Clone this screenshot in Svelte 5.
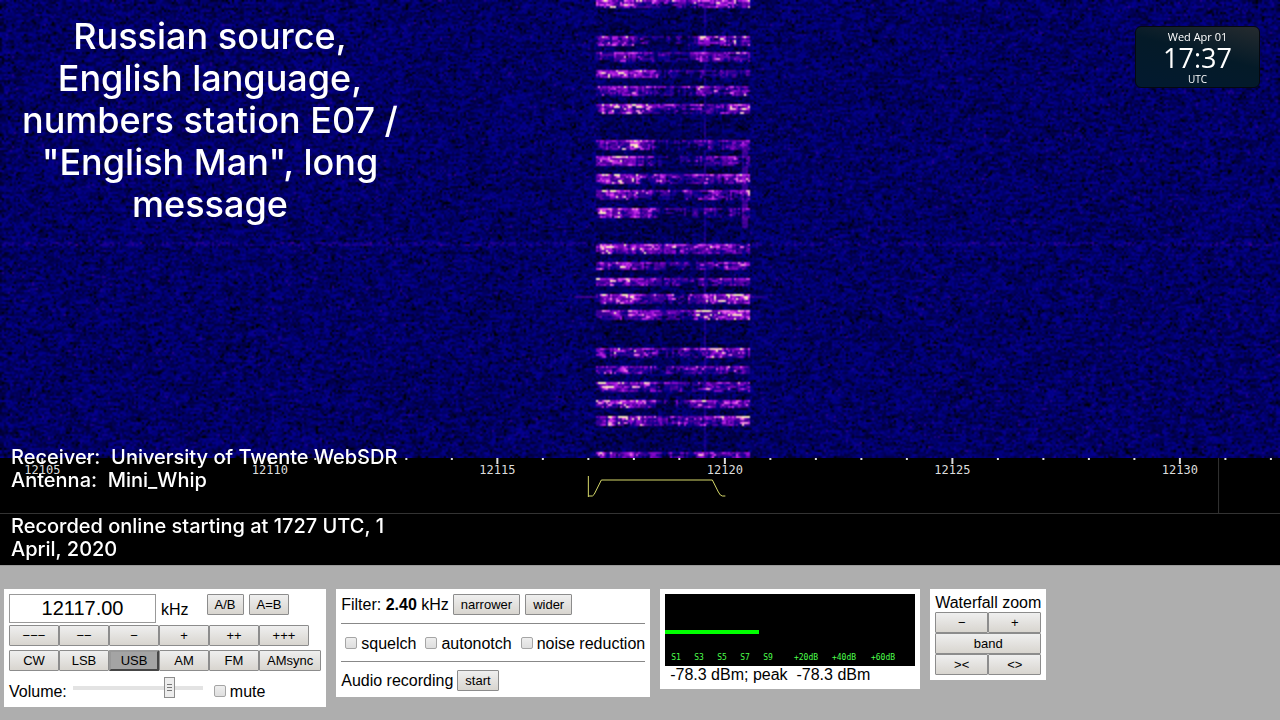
<script lang="ts">
  import { onMount } from "svelte";

  type Burst = { y: number; h: number; left: number; mid: number; right: number };

  const START_KHZ = 12104.07;
  const SPAN_KHZ = 28.13;

  const steps = ["---", "--", "-", "+", "++", "+++"];
  const modes = ["CW", "LSB", "USB", "AM", "FM", "AMsync"];

  const meterLabels = [
    { x: 11, text: "S1" },
    { x: 34, text: "S3" },
    { x: 57, text: "S5" },
    { x: 80, text: "S7" },
    { x: 103, text: "S9" },
    { x: 141, text: "+20dB" },
    { x: 179, text: "+40dB" },
    { x: 218, text: "+60dB" },
  ];

  const bursts: Burst[] = [
    { y: 0, h: 7, left: 0.6, mid: 0.45, right: 0.6 },
    { y: 35, h: 10, left: 0.5, mid: 0.22, right: 0.55 },
    { y: 52, h: 10, left: 0.5, mid: 0.22, right: 0.45 },
    { y: 69, h: 9, left: 0.68, mid: 0.2, right: 0.3 },
    { y: 86, h: 10, left: 0.5, mid: 0.3, right: 0.5 },
    { y: 103, h: 10, left: 0.65, mid: 0.3, right: 0.52 },
    { y: 140, h: 9, left: 0.6, mid: 0.2, right: 0.3 },
    { y: 156, h: 10, left: 0.55, mid: 0.2, right: 0.36 },
    { y: 173, h: 10, left: 0.64, mid: 0.42, right: 0.5 },
    { y: 190, h: 9, left: 0.6, mid: 0.35, right: 0.46 },
    { y: 208, h: 9, left: 0.64, mid: 0.2, right: 0.25 },
    { y: 243, h: 11, left: 0.64, mid: 0.42, right: 0.5 },
    { y: 261, h: 9, left: 0.56, mid: 0.3, right: 0.42 },
    { y: 278, h: 8, left: 0.62, mid: 0.3, right: 0.34 },
    { y: 294, h: 9, left: 0.55, mid: 0.36, right: 0.64 },
    { y: 310, h: 10, left: 0.46, mid: 0.3, right: 0.66 },
    { y: 348, h: 10, left: 0.52, mid: 0.32, right: 0.48 },
    { y: 365, h: 9, left: 0.48, mid: 0.3, right: 0.5 },
    { y: 382, h: 9, left: 0.58, mid: 0.34, right: 0.42 },
    { y: 399, h: 9, left: 0.56, mid: 0.3, right: 0.5 },
    { y: 415, h: 10, left: 0.6, mid: 0.44, right: 0.52 },
    { y: 452, h: 6, left: 0.5, mid: 0.36, right: 0.5 },
  ];

  let frequency = $state("12117.00");
  let mode = $state("USB");
  let volume = $state(77);
  let muted = $state(false);
  let squelch = $state(false);
  let autonotch = $state(false);
  let noiseReduction = $state(false);
  let waterfall: HTMLCanvasElement;

  const ticks = Array.from({ length: 28 }, (_, i) => 12105 + i);

  function toPercent(khz: number) {
    return `${((khz - START_KHZ) / SPAN_KHZ) * 100}%`;
  }

  function createRandom(seed: number) {
    return () => {
      seed = (seed * 1664525 + 1013904223) >>> 0;
      return seed / 4294967296;
    };
  }

  // black -> blue -> violet -> pink -> pale yellow
  const palette = [
    [0, 0, 0],
    [2, 0, 142],
    [70, 0, 150],
    [150, 10, 215],
    [235, 80, 240],
    [255, 240, 190],
  ];

  function colorFor(level: number) {
    const pos = Math.max(0, Math.min(0.999, level)) * (palette.length - 1);
    const i = Math.floor(pos);
    return palette[i].map((c, k) => c + (palette[i + 1][k] - c) * (pos - i));
  }

  function burstLevel(burst: Burst, x: number) {
    if (x < 636) return burst.left;
    if (x < 662) return burst.left + ((burst.mid - burst.left) * (x - 636)) / 26;
    if (x < 684) return burst.mid;
    if (x < 700) return burst.mid + ((burst.right - burst.mid) * (x - 684)) / 16;
    return burst.right;
  }

  function drawWaterfall() {
    const ctx = waterfall.getContext("2d");
    if (!ctx) return;
    const { width, height } = waterfall;
    const random = createRandom(12117);
    const image = ctx.createImageData(width, height);
    const columns = new Map<Burst, number[]>();
    for (const burst of bursts) {
      let v = 0;
      columns.set(burst, Array.from({ length: width }, () => {
        if (random() < 0.55) v = (random() - 0.5) * 0.36;
        return v;
      }));
    }

    for (let row = 0; row < height; row++) {
      let smear = 0;
      let spark = 0;
      for (let col = 0; col < width; col++) {
        const x = col * 2;
        const y = row * 2;
        if (random() < 0.6) smear = random();
        if (random() < 0.6) spark = random() ** 5;
        let level = 0.05 + smear * 0.12 + random() * 0.07;
        if (random() < 0.05) level -= 0.12;
        if (random() < 0.025) level += 0.1;
        if (y >= 242 && y <= 244 && random() < 0.5) level += 0.11;
        if (y === 296 && x > 572 && x < 768) level += 0.2;
        if (x === 704) level += 0.14;
        if (x >= 742 && x <= 746 && y > 142 && y < 228) level += 0.26;

        if (x >= 596 && x <= 748) {
          const burst = bursts.find((b) => y >= b.y && y < b.y + b.h);
          if (burst) {
            const depth = (y - burst.y) / burst.h;
            const column = columns.get(burst)?.[col] ?? 0;
            const strength = burstLevel(burst, x);
            level = strength * 0.82 - depth * 0.16 + column + (smear - 0.5) * 0.3;
            level += spark * strength * 1.1;
            if (depth < 0.2) level += 0.1;
            if (x < 600) level -= 0.15;
            level = Math.max(0.05 + smear * 0.14, level);
          } else {
            level -= 0.02;
          }
        }

        const [r, g, b] = colorFor(level);
        image.data.set([r, g, b, 255], (row * width + col) * 4);
      }
    }
    ctx.putImageData(image, 0, 0);
  }

  onMount(drawWaterfall);
</script>

<main class="receiver">
  <section class="display">
    <canvas bind:this={waterfall} class="waterfall" width="640" height="229"></canvas>

    <svg class="scale">
      {#each ticks as khz}
        <line
          x1={toPercent(khz)}
          x2={toPercent(khz)}
          y1="0"
          y2={khz % 5 === 0 ? 6 : 2}
          stroke="#ddd"
          stroke-width="2"
        />
        {#if khz % 5 === 0}
          <text x={toPercent(khz)} y="16" text-anchor="middle">{khz}</text>
        {/if}
      {/each}
      <line x1={toPercent(12130.85)} x2={toPercent(12130.85)} y1="0" y2="55" stroke="#333" />
      <svg class="passband" x={toPercent(12117)} y="18">
        <path
          d="M0 0V21M0 20H4Q6 19 7 16L13 4H124L130 16Q132 20 134 20H137"
          fill="none"
          stroke="#d6d96a"
        />
      </svg>
    </svg>
    <div class="band-plan"></div>

    <h1 class="title">Russian source,
English language,
numbers station E07 /
"English Man", long
message</h1>

    <p class="details">Receiver:  University of Twente WebSDR
Antenna:  Mini_Whip

Recorded online starting at 1727 UTC, 1
April, 2020</p>

    <div class="clock">
      <span>Wed Apr 01</span>
      <time>17:37</time>
      <span class="zone">UTC</span>
    </div>
  </section>

  <section class="controls">
    <form class="panel tuning" onsubmit={(e) => e.preventDefault()}>
      <div class="frequency">
        <input id="frequency" type="text" bind:value={frequency} />
        <label for="frequency">kHz</label>
        <div class="memory">
          <button type="button">A/B</button>
          <button type="button">A=B</button>
        </div>
      </div>
      <div class="joined">
        {#each steps as step}
          <button type="button">{step.replaceAll("-", "−")}</button>
        {/each}
      </div>
      <div class="joined">
        {#each modes as name}
          <button type="button" class:active={mode === name} onclick={() => (mode = name)}>
            {name}
          </button>
        {/each}
      </div>
      <div class="volume">
        <label for="volume">Volume:</label>
        <input id="volume" type="range" bind:value={volume} />
        <label class="check"><input type="checkbox" bind:checked={muted} />mute</label>
      </div>
    </form>

    <div class="panel filter">
      <div class="line">
        <span>Filter: <b>2.40</b> kHz</span>
        <button type="button">narrower</button>
        <button type="button" class="next">wider</button>
      </div>
      <hr />
      <div class="checks">
        <label class="check"><input type="checkbox" bind:checked={squelch} />squelch</label>
        <label class="check"><input type="checkbox" bind:checked={autonotch} />autonotch</label>
        <label class="check"><input type="checkbox" bind:checked={noiseReduction} />noise reduction</label>
      </div>
      <hr />
      <div class="line">
        <span>Audio recording</span>
        <button type="button">start</button>
      </div>
    </div>

    <div class="panel">
      <svg class="meter" width="250" height="72">
        <rect width="250" height="72" fill="#000" />
        <rect y="36" width="94" height="4" fill="#0f0" />
        {#each meterLabels as label}
          <text x={label.x} y="66" text-anchor="middle">{label.text}</text>
        {/each}
      </svg>
      <div class="reading">-78.3 dBm; peak  -78.3 dBm</div>
    </div>

    <div class="panel zoom">
      <span>Waterfall zoom</span>
      <div class="zoom-grid">
        <button type="button">−</button>
        <button type="button">+</button>
        <button type="button" class="wide">band</button>
        <button type="button">&gt;&lt;</button>
        <button type="button">&lt;&gt;</button>
      </div>
    </div>
  </section>
</main>

<style>
  :global(body) {
    margin: 0;
    background: #aeaeae;
  }

  .receiver {
    font-family: "Liberation Sans", Arial, sans-serif;
    font-size: 16px;
    line-height: 18px;
    color: #000;
  }

  .display {
    position: relative;
    background: #000;
    color: #fff;
    border-bottom: 1px solid #999;
  }

  .waterfall {
    display: block;
    width: 100%;
    height: 458px;
  }

  .scale {
    display: block;
    width: 100%;
    height: 55px;
    overflow: hidden;
  }

  .scale text {
    fill: #ddd;
    font-family: "DejaVu Sans Mono", monospace;
    font-size: 12px;
  }

  .passband {
    overflow: visible;
  }

  .band-plan {
    height: 51px;
    border-top: 1px solid #333;
  }

  .title,
  .details {
    position: absolute;
    margin: 0;
    font-family: Inter, sans-serif;
    font-weight: 500;
    white-space: pre;
  }

  .title {
    top: 15px;
    left: 22px;
    font-size: 36px;
    line-height: 42px;
    text-align: center;
  }

  .details {
    top: 446px;
    left: 11px;
    font-size: 20px;
    line-height: 23px;
  }

  .clock {
    position: absolute;
    top: 26px;
    right: 20px;
    box-sizing: border-box;
    display: flex;
    flex-direction: column;
    align-items: center;
    width: 125px;
    height: 62px;
    padding-top: 3px;
    border: 1px solid #05080f;
    border-radius: 6px;
    background: linear-gradient(15deg, #021a30, #041a28 55%, #252b2f);
    font-family: "Open Sans", sans-serif;
    font-size: 11px;
    line-height: 14px;
  }

  .clock time {
    font-size: 27px;
    line-height: 28px;
  }

  .clock .zone {
    font-size: 10px;
  }

  .controls {
    display: flex;
    flex-wrap: wrap;
    align-items: flex-start;
    gap: 10px;
    padding: 23px 4px;
  }

  .panel {
    padding: 5px;
    background: #fff;
  }

  button {
    box-sizing: border-box;
    height: 21px;
    margin: 0;
    padding: 0 7px;
    border: 1px solid #8c8c8c;
    border-radius: 1px;
    background: linear-gradient(#efefef, #d8d5cf);
    color: #000;
    font-family: inherit;
    font-size: 13px;
    line-height: 16px;
  }

  button.active {
    border: 2px outset #999;
    background: #a4a4a4;
  }

  .tuning {
    display: flex;
    flex-direction: column;
  }

  .frequency {
    display: flex;
    align-items: center;
    gap: 5px;
    margin-bottom: 2px;
  }

  .frequency input {
    box-sizing: border-box;
    width: 147px;
    height: 29px;
    padding: 0;
    border: 1px solid #999;
    font-family: inherit;
    font-size: 20px;
    text-align: center;
  }

  .frequency label {
    padding-top: 2px;
  }

  .memory {
    display: flex;
    align-self: flex-start;
    gap: 5px;
    margin-left: 13px;
  }

  .joined {
    display: flex;
    margin-bottom: 4px;
  }

  .joined button {
    min-width: 50px;
    padding: 0 7px;
  }

  .volume {
    display: flex;
    align-items: center;
    height: 27px;
    padding-right: 1px;
  }

  .volume label {
    padding-top: 7px;
  }

  .volume .check {
    margin-left: 8px;
  }

  input[type="range"] {
    appearance: none;
    width: 130px;
    height: 21px;
    margin: 0 3px 2px 6px;
    background: linear-gradient(#e3e3e3, #e3e3e3) center / 100% 4px no-repeat;
  }

  input[type="range"]::-webkit-slider-thumb {
    appearance: none;
    box-sizing: border-box;
    width: 11px;
    height: 21px;
    border: 1px solid #8c8c8c;
    background:
      repeating-linear-gradient(#777 0 1px, transparent 1px 3px) center / 5px 7px no-repeat,
      #ededed;
  }

  .check {
    display: flex;
    align-items: center;
    gap: 4px;
  }

  input[type="checkbox"] {
    appearance: none;
    box-sizing: border-box;
    width: 12px;
    height: 12px;
    margin: 0 0 2px;
    border: 1px solid #a5a5a5;
    border-radius: 2px;
    background: linear-gradient(#eee, #dedede);
  }

  input[type="checkbox"]:checked {
    background: #555;
  }

  .filter {
    padding-bottom: 6px;
  }

  .line {
    display: flex;
    align-items: center;
    gap: 4px;
  }

  .line .next {
    margin-left: 1px;
  }

  hr {
    margin: 8px 0;
    border: 0;
    border-top: 1px solid #888;
  }

  .checks {
    display: flex;
    gap: 9px;
    margin-left: 4px;
    padding: 4px 0 1px;
    height: 16px;
    align-items: center;
  }

  .meter {
    display: block;
  }

  .meter text {
    fill: #4dff4d;
    font-family: "DejaVu Sans Mono", monospace;
    font-size: 8px;
  }

  .reading {
    padding: 0 5px;
    white-space: pre;
  }

  .zoom-grid {
    display: grid;
    grid-template-columns: 1fr 1fr;
  }

  .zoom-grid .wide {
    grid-column: span 2;
  }
</style>
